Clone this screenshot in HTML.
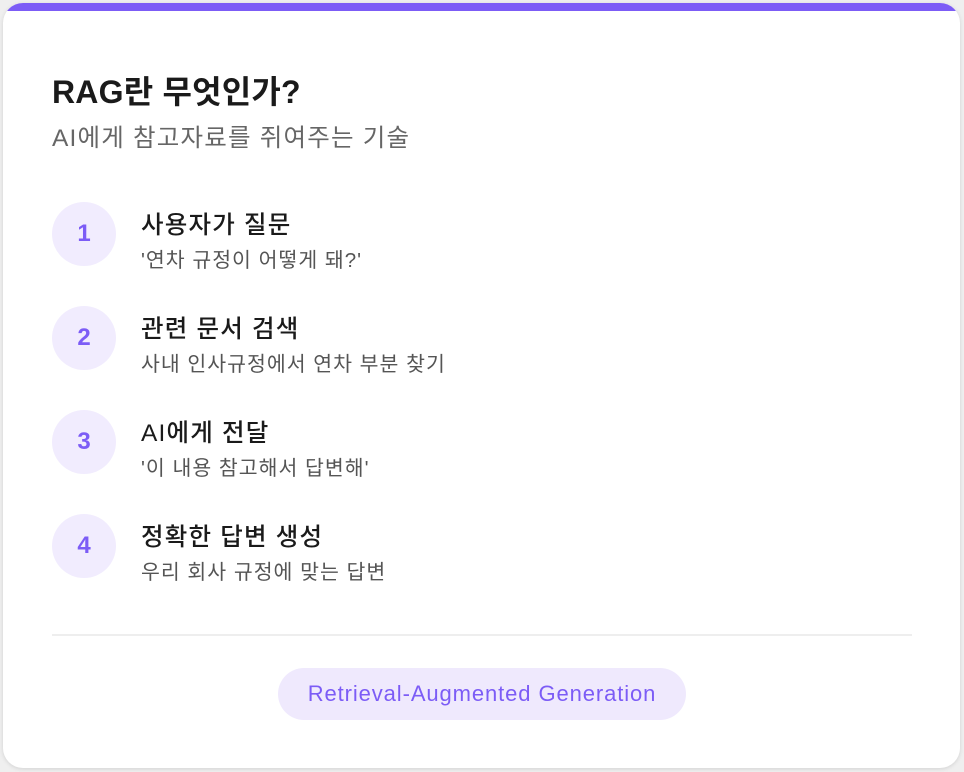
<!DOCTYPE html>
<html><head><meta charset="utf-8"><style>
html,body{margin:0;padding:0;width:964px;height:772px;background:#efefef;overflow:hidden;font-family:"Liberation Sans","Noto Sans CJK KR",sans-serif;}
.card{position:absolute;left:3px;top:3px;width:957px;height:765px;background:#fff;border-radius:20px;overflow:hidden;box-shadow:0 1px 4px rgba(0,0,0,.12);}
.bar{position:absolute;left:0;top:0;right:0;height:8px;background:#7c5cf6;}
h1{position:absolute;left:49px;top:64px;margin:0;font-size:32px;font-weight:700;color:#1a1a1a;letter-spacing:0.2px;}
.sub{position:absolute;left:49px;top:116px;font-size:24.5px;color:#666;letter-spacing:1.2px;}
.step{position:absolute;left:49px;width:800px;height:64px;}
.c{position:absolute;left:0;top:0;width:64px;height:64px;border-radius:50%;background:#f1ecfe;color:#7c5cf6;font-size:24px;font-weight:700;text-align:center;line-height:64px;}
.t{position:absolute;left:89px;top:4px;font-size:24.5px;font-weight:500;color:#1a1a1a;letter-spacing:1.2px;white-space:nowrap;}
.d{position:absolute;left:89px;top:41px;font-size:20.5px;color:#555;letter-spacing:1px;white-space:nowrap;}
.hr{position:absolute;left:49px;top:631px;width:860px;height:2px;background:#eeeeee;}
.pill{position:absolute;left:275px;top:665px;width:408px;height:52px;border-radius:26px;background:#efe9fd;color:#7c5cf6;font-size:22px;letter-spacing:0.9px;text-align:center;line-height:52px;}
</style></head><body>
<div class="card"><div class="bar"></div>
<h1>RAG란 무엇인가?</h1>
<div class="sub">AI에게 참고자료를 쥐여주는 기술</div>
<div class="step" style="top:199px"><div class="c">1</div><div class="t">사용자가 질문</div><div class="d">'연차 규정이 어떻게 돼?'</div></div>
<div class="step" style="top:303px"><div class="c">2</div><div class="t">관련 문서 검색</div><div class="d">사내 인사규정에서 연차 부분 찾기</div></div>
<div class="step" style="top:407px"><div class="c">3</div><div class="t">AI에게 전달</div><div class="d">'이 내용 참고해서 답변해'</div></div>
<div class="step" style="top:511px"><div class="c">4</div><div class="t">정확한 답변 생성</div><div class="d">우리 회사 규정에 맞는 답변</div></div>
<div class="hr"></div>
<div class="pill">Retrieval-Augmented Generation</div>
</div>
</body></html>
